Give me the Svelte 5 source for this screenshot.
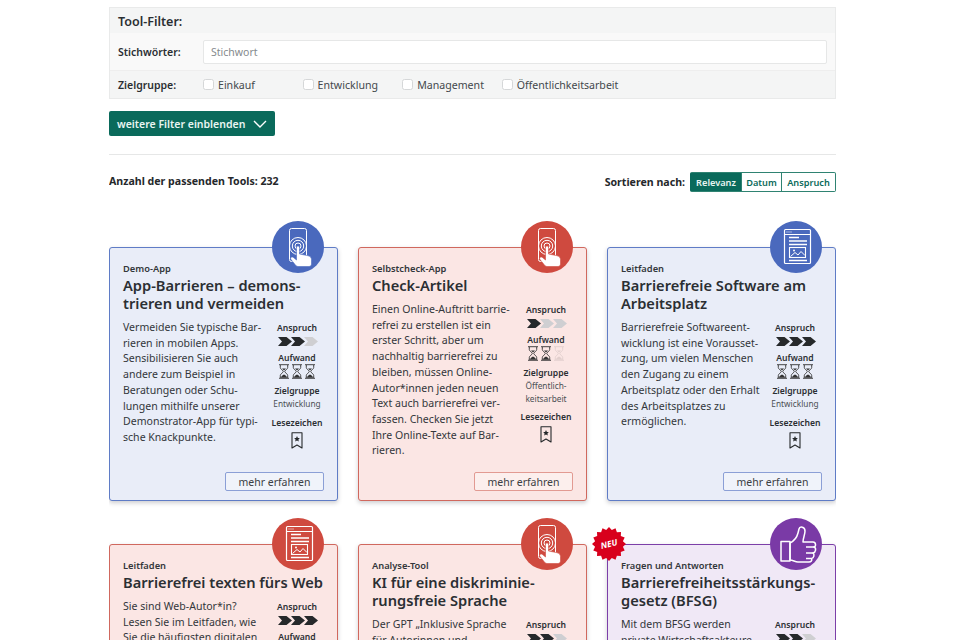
<script>
  const star = [];
  for (let i = 0; i < 32; i++) {
    const r = i % 2 ? 14.2 : 17;
    const a = (i / 32) * Math.PI * 2;
    star.push(`${(17 + r * Math.cos(a)).toFixed(1)},${(17 + r * Math.sin(a)).toFixed(1)}`);
  }
  const starPoints = star.join(" ");

  const targets = ["Einkauf", "Entwicklung", "Management", "Öffentlichkeitsarbeit"];
  const sorts = ["Relevanz", "Datum", "Anspruch"];

  const cards = [
    {
      tone: "blue", icon: "touch", kicker: "Demo-App",
      title: ["App-Barrieren – demons-", "trieren und vermeiden"],
      text: ["Vermeiden Sie typische Bar-", "rieren in mobilen Apps.", "Sensibilisieren Sie auch", "andere zum Beispiel in", "Beratungen oder Schu-", "lungen mithilfe unserer", "Demonstrator-App für typi-", "sche Knackpunkte."],
      level: 2, effort: 3, group: ["Entwicklung"]
    },
    {
      tone: "red", icon: "touch", kicker: "Selbstcheck-App",
      title: ["Check-Artikel"],
      text: ["Einen Online-Auftritt barrie-", "refrei zu erstellen ist ein", "erster Schritt, aber um", "nachhaltig barrierefrei zu", "bleiben, müssen Online-", "Autor*innen jeden neuen", "Text auch barrierefrei ver-", "fassen. Checken Sie jetzt", "Ihre Online-Texte auf Bar-", "rieren."],
      level: 1, effort: 2, group: ["Öffentlich-", "keitsarbeit"]
    },
    {
      tone: "blue", icon: "doc", kicker: "Leitfaden",
      title: ["Barrierefreie Software am", "Arbeitsplatz"],
      text: ["Barrierefreie Softwareent-", "wicklung ist eine Vorausset-", "zung, um vielen Menschen", "den Zugang zu einem", "Arbeitsplatz oder den Erhalt", "des Arbeitsplatzes zu", "ermöglichen."],
      level: 3, effort: 3, group: ["Entwicklung"]
    },
    {
      tone: "red", icon: "doc", kicker: "Leitfaden",
      title: ["Barrierefrei texten fürs Web"],
      text: ["Sie sind Web-Autor*in?", "Lesen Sie im Leitfaden, wie", "Sie die häufigsten digitalen", "Barrieren vermeiden."],
      level: 3, effort: 2, group: ["Öffentlich-", "keitsarbeit"]
    },
    {
      tone: "red", icon: "touch", kicker: "Analyse-Tool",
      title: ["KI für eine diskriminie-", "rungsfreie Sprache"],
      text: ["Der GPT „Inklusive Sprache", "für Autorinnen und"],
      level: 2, effort: 1, group: ["Öffentlich-", "keitsarbeit"]
    },
    {
      tone: "purple", icon: "thumb", kicker: "Fragen und Antworten", isNew: true,
      title: ["Barrierefreiheitsstärkungs-", "gesetz (BFSG)"],
      text: ["Mit dem BFSG werden", "private Wirtschaftsakteure"],
      level: 2, effort: 1, group: ["Management"]
    }
  ];
</script>

<div class="page">
  <section class="filter">
    <h2>Tool-Filter:</h2>
    <div class="row keyword">
      <label for="kw">Stichwörter:</label>
      <input id="kw" type="text" placeholder="Stichwort" />
    </div>
    <div class="row groups">
      <span class="label">Zielgruppe:</span>
      <div class="checks">
        {#each targets as t}
          <label class="check"><input type="checkbox" />{t}</label>
        {/each}
      </div>
    </div>
  </section>

  <button class="more">
    weitere Filter einblenden
    <svg width="14" height="8" viewBox="0 0 14 8" fill="none" stroke="#fff" stroke-width="1.4"><path d="M1 1l6 6 6-6" /></svg>
  </button>

  <hr />

  <div class="result-bar">
    <strong>Anzahl der passenden Tools: 232</strong>
    <div class="sort">
      <strong>Sortieren nach:</strong>
      <div class="sort-btns">
        {#each sorts as s, i}
          <button class:active={i === 0}>{s}</button>
        {/each}
      </div>
    </div>
  </div>

  <div class="cards">
    {#each cards as card}
      <article class="card {card.tone}">
        <div class="badge">
          {#if card.icon === "touch"}
            <svg viewBox="0 0 52 52" width="52" height="52">
              <rect x="17.5" y="7.5" width="17" height="33" rx="2" fill="none" stroke="#fff" stroke-width="1" />
              <circle cx="26" cy="25" r="8.5" fill="none" stroke="#fff" stroke-width="1" />
              <circle cx="26" cy="25" r="5.7" fill="none" stroke="#fff" stroke-width="1" />
              <circle cx="26" cy="25" r="3" fill="none" stroke="#fff" stroke-width="1" />
              <path d="M24.5 26.5c0-2 3-2 3 0v6.5l8 1.6c2.500.5 4 1.800 4 4v4.400c0 1.500-1 2.500-2.500 2.500H26c-1.500 0-2-1-3-2l-4-5c-1.300-1.800 1-3.500 2.500-2l3 2.500z" fill="#fff" class="hand" />
            </svg>
          {:else if card.icon === "doc"}
            <svg viewBox="0 0 52 52" width="52" height="52" fill="none" stroke="#fff">
              <rect x="14.500" y="8.500" width="26" height="34" rx="1" stroke-width="1.200" />
              <path d="M14.500 13.500h26" stroke-width="1" />
              <path d="M16.500 11h1M18.500 11h1M20.500 11h1" stroke-width="1" />
              <path d="M19 16.500h10M19 20h18M19 23.500h18M19 39.500h18" stroke-width="1.300" />
              <rect x="19.500" y="26.500" width="16" height="10" stroke-width="1.100" />
              <path d="M20.500 35.500l4.500-4 3 2.500 3-3.500 4 4" stroke-width="1" />
              <circle cx="24" cy="29.500" r="1" fill="#fff" stroke="none" />
            </svg>
          {:else}
            <svg viewBox="0 0 52 52" width="52" height="52" fill="none" stroke="#fff" stroke-width="1.500" stroke-linejoin="round">
              <rect x="11" y="23.500" width="9" height="19.500" />
              <path d="M20 25c4-2 7-6 8-10l1-4c.7-3 6-2.500 6 2 0 4-2 7-2 11h10c3.200 0 3.200 4.500 1 5 2.500 1 2 5.500-1 6 1.800 1.500 1 5-1.500 5.500 1 2-.5 3.500-2.500 3.500H28c-3 0-5-2-8-2z" />
              <path d="M36 29h8M36 35h7M36 40.500h5" stroke-width="1.300" />
            </svg>
          {/if}
        </div>
        {#if card.isNew}
          <div class="neu">
            <svg viewBox="0 0 34 34" width="34" height="34"><polygon points={starPoints} fill="#d8001c" /></svg>
            <span>NEU</span>
          </div>
        {/if}

        <div class="kicker">{card.kicker}</div>
        <h3>{#each card.title as line}<span>{line}</span>{/each}</h3>

        <div class="body">
          <p>{#each card.text as line}<span>{line}</span>{/each}</p>
          <div class="meta">
            <b>Anspruch</b>
            <div class="chevrons">
              {#each [0, 1, 2] as i}
                <svg viewBox="0 0 14 9" width="14" height="9"><polygon points="0,0 8.500,0 14,4.500 8.500,9 0,9 4,4.500" fill={i < card.level ? "#26292b" : "#cfcfd2"} /></svg>
              {/each}
            </div>
            <b>Aufwand</b>
            <div class="glasses">
              {#each [0, 1, 2] as i}
                <svg viewBox="0 0 12 15" width="12" height="15" class:off={i >= card.effort}>
                  <path d="M1 .7h10M1 14.300h10M2.300 1v2.500c0 1.700 3 3 3 4s-3 2.300-3 4V14M9.700 1v2.500c0 1.700-3 3-3 4s3 2.300 3 4V14" fill="none" stroke="#333" stroke-width=".9" />
                  <path d="M2.800 13.800c.3-1.800 2-3 3.200-3.400 1.200.4 2.900 1.600 3.200 3.400zM4 4.500h4L6 6.500z" fill="#333" />
                </svg>
              {/each}
            </div>
            <b class="zg">Zielgruppe</b>
            <div class="group">{#each card.group as g}<span>{g}</span>{/each}</div>
            <b class="lz">Lesezeichen</b>
            <svg class="bookmark" viewBox="0 0 12 17" width="12" height="17">
              <path d="M1 .700h10V16l-5-3-5 3z" fill="none" stroke="#26292b" stroke-width="1.100" stroke-linejoin="round" />
              <path d="M6 4l.9 1.900 2 .2-1.500 1.400.4 2L6 8.500l-1.800 1 .4-2L3.100 6.100l2-.2z" fill="#26292b" />
            </svg>
          </div>
        </div>

        <button class="go">mehr erfahren</button>
      </article>
    {/each}
  </div>
</div>

<style>
  :global(body) {
    margin: 0;
    background: #fff;
    overflow: hidden;
    font-family: "Noto Sans", "Open Sans", sans-serif;
    color: #2b2f33;
  }
  .page {
    width: 727px;
    margin-left: 109px;
    padding-top: 7px;
    height: 633px;
    overflow: hidden;
  }

  .filter {
    background: #f4f5f5;
    border: 1px solid #e9eaea;
    box-sizing: border-box;
    height: 92px;
  }
  .filter h2 {
    margin: 0;
    height: 25px;
    padding-left: 8px;
    font-size: 12.500px;
    line-height: 27px;
    font-weight: 600;
  }
  .row {
    display: flex;
    align-items: center;
    padding-left: 8px;
    font-size: 10.500px;
    font-weight: 600;
  }
  .row > label, .row .label {
    width: 85px;
    flex: none;
  }
  .keyword {
    height: 37px;
    background: #f9f9f9;
    border-bottom: 1px solid #eeeeee;
  }
  .keyword input {
    box-sizing: border-box;
    width: 624px;
    height: 24px;
    border: 1px solid #e6e7e7;
    border-radius: 2px;
    background: #fff;
    padding: 0 7px;
    font: 400 10.500px "Noto Sans", sans-serif;
    outline: none;
  }
  .keyword input::placeholder {
    color: #858a8d;
  }
  .groups {
    height: 27px;
  }
  .checks {
    display: grid;
    grid-template-columns: repeat(4, 99.600px);
  }
  .check {
    display: flex;
    align-items: center;
    gap: 4px;
    font-size: 10.600px;
    font-weight: 400;
    color: #43484c;
    white-space: nowrap;
  }
  .check input {
    appearance: none;
    flex: none;
    margin: 0;
    width: 11px;
    height: 11px;
    border: 1px solid #d5d7d8;
    border-radius: 2.500px;
    background: #fff;
  }

  .more {
    display: flex;
    align-items: center;
    gap: 8px;
    margin-top: 12px;
    height: 25px;
    width: 166px;
    padding: 0 0 0 8px;
    border: none;
    border-radius: 2px;
    background: #0a6a5b;
    color: #e9f5f2;
    font: 600 10.500px "Noto Sans", sans-serif;
    white-space: nowrap;
  }

  hr {
    margin: 18px 0 0;
    border: none;
    border-top: 1px solid #e6e7e7;
  }

  .result-bar {
    display: flex;
    justify-content: space-between;
    align-items: flex-start;
    margin-top: 17px;
    font-size: 10.600px;
    line-height: 20px;
  }
  .result-bar strong {
    font-weight: 700;
    color: #25282b;
  }
  .result-bar > strong {
    margin-top: -1px;
  }
  .sort {
    display: flex;
    align-items: center;
    gap: 5px;
  }
  .sort-btns {
    display: flex;
    height: 20px;
  }
  .sort-btns button {
    width: 40px;
    padding: 0;
    border: 1px solid #2f8372;
    border-left: none;
    background: #fff;
    color: #0a6a5b;
    font: 600 9.200px "Noto Sans", sans-serif;
  }
  .sort-btns button:last-child {
    width: 54px;
    border-radius: 0 2px 2px 0;
  }
  .sort-btns button.active {
    width: 52px;
    border-left: 1px solid #0a6a5b;
    border-radius: 2px 0 0 2px;
    background: #0a6a5b;
    color: #e9f5f2;
  }

  .cards {
    display: grid;
    grid-template-columns: repeat(3, 229px);
    justify-content: space-between;
    row-gap: 43px;
    margin-top: 55px;
  }
  .card {
    position: relative;
    box-sizing: border-box;
    height: 254px;
    display: flex;
    flex-direction: column;
    padding: 15px 12px 9px 13px;
    border: 1.500px solid;
    border-radius: 3px;
    box-shadow: 0 2px 4px rgba(60, 60, 70, 0.25);
  }
  .card.blue { background: #e9edf8; border-color: #5f7cc6; --tone: #4a69bd; --btn: #8b9fd6; }
  .card.red { background: #fbe6e4; border-color: #d0685e; --tone: #cf4a3f; --btn: #e29a92; }
  .card.purple { background: #f0e8f6; border-color: #7c3fa8; --tone: #7a3aa6; --btn: #a880c6; }

  .badge {
    position: absolute;
    top: -27px;
    right: 13px;
    width: 52px;
    height: 52px;
    border-radius: 50%;
    background: var(--tone);
  }
  .badge svg {
    display: block;
  }
  .hand {
    stroke: var(--tone);
    stroke-width: 0.6;
  }
  .neu {
    position: absolute;
    top: -18px;
    left: -16px;
    width: 34px;
    height: 34px;
  }
  .neu svg {
    display: block;
  }
  .neu span {
    position: absolute;
    inset: 0;
    text-align: center;
    line-height: 34px;
    color: #fff;
    font-size: 8.500px;
    font-weight: 700;
    font-style: italic;
    transform: rotate(-14deg);
  }

  .kicker {
    font-size: 9.300px;
    font-weight: 600;
    line-height: 12px;
    color: #33373b;
  }
  h3 {
    margin: 1px 0 8px;
    font-size: 14.650px;
    line-height: 18px;
    font-weight: 600;
    color: #2b2f33;
    white-space: nowrap;
  }
  h3 span, p span, .group span {
    display: block;
  }

  .body {
    display: flex;
    justify-content: space-between;
    align-items: flex-start;
  }
  p {
    margin: 0;
    font-size: 10.550px;
    line-height: 15.700px;
    color: #33373b;
    white-space: nowrap;
  }
  .meta {
    flex: none;
    width: 56px;
    display: flex;
    flex-direction: column;
    align-items: center;
    font-size: 8.600px;
    line-height: 12px;
    padding-top: 2px;
    white-space: nowrap;
  }
  .meta b {
    font-weight: 600;
    color: #2b2f33;
  }
  .chevrons {
    display: flex;
    gap: 0;
    margin: 3px 0 6px;
    height: 9px;
  }
  .chevrons svg {
    display: block;
    margin-right: -1px;
  }
  .glasses {
    display: flex;
    gap: 1px;
    height: 15px;
  }
  .glasses svg {
    display: block;
  }
  .glasses svg.off {
    opacity: 0.12;
  }
  .zg {
    margin-top: 6px;
  }
  .group {
    margin-top: 1px;
    text-align: center;
    font-size: 8.300px;
    color: #4b5054;
    line-height: 12.500px;
  }
  .lz {
    margin-top: 6px;
  }
  .bookmark {
    display: block;
    margin-top: 3px;
  }

  .go {
    position: absolute;
    right: 13px;
    bottom: 9px;
    width: 99px;
    height: 19px;
    padding: 0;
    border: 1px solid var(--btn);
    border-radius: 2px;
    background: rgba(255, 255, 255, 0.35);
    color: #3b4044;
    font: 400 10.500px "Noto Sans", sans-serif;
  }
</style>
